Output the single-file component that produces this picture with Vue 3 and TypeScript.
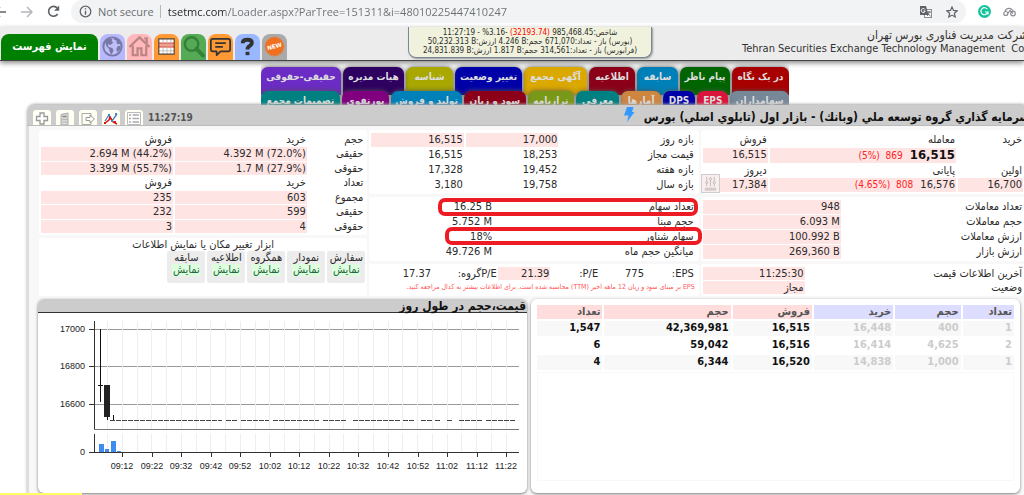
<script setup lang="ts">
import { ref } from 'vue'

interface Tab { label: string; color: string; grow: number }

const url = ref('tsetmc.com/Loader.aspx?ParTree=151311&i=48010225447410247')

const topTabs: Tab[] = [
  { label: 'در یک نگاه', color: '#a80000', grow: 57 },
  { label: 'پیام ناظر', color: '#006400', grow: 50 },
  { label: 'سابقه', color: '#0080b8', grow: 41 },
  { label: 'اطلاعیه', color: '#8b0018', grow: 46 },
  { label: 'آگهی مجمع', color: '#dba800', grow: 63 },
  { label: 'تغییر وضعیت', color: '#0000a8', grow: 67 },
  { label: 'شناسه', color: '#a8a800', grow: 47 },
  { label: 'هیات مدیره', color: '#2e0060', grow: 61 },
  { label: 'حقیقی-حقوقی', color: '#6a2cc4', grow: 80 },
]
const lowerTabs: Tab[] = [
  { label: 'سهامداران', color: '#778899', grow: 58 },
  { label: 'EPS', color: '#dc143c', grow: 31 },
  { label: 'DPS', color: '#0000a8', grow: 32 },
  { label: 'آمارها', color: '#cd853f', grow: 39 },
  { label: 'معرفی', color: '#008080', grow: 43 },
  { label: 'ترازنامه', color: '#789818', grow: 46 },
  { label: 'سود و زیان', color: '#8b0018', grow: 61 },
  { label: 'تولید و فروش', color: '#0080b8', grow: 70 },
  { label: 'پورتفوی', color: '#800080', grow: 47 },
  { label: 'تصمیمات مجمع', color: '#008080', grow: 78 },
]
const columns = (tabs: Tab[]) => tabs.map(t => `${t.grow}fr`).join(' ')

const ranges = [
  ['بازه روز', '17,000', '16,515'],
  ['قیمت مجاز', '18,253', '16,515'],
  ['بازه هفته', '19,452', '17,328'],
  ['بازه سال', '19,758', '3,180'],
]
const shares = [
  ['تعداد سهام', '16.25 B'],
  ['حجم مبنا', '5.752 M'],
  ['سهام شناور', '18%'],
  ['میانگین حجم ماه', '49.726 M'],
]
const trades = [
  ['تعداد معاملات', '948'],
  ['حجم معاملات', '6.093 M'],
  ['ارزش معاملات', '100.992 B'],
  ['ارزش بازار', '269,360 B'],
]
const clients = [
  { head: true, cells: ['حجم', 'خرید', 'فروش'] },
  { head: false, cells: ['حقیقی', '4.392 M (72.0%)', '2.694 M (44.2%)'] },
  { head: false, cells: ['حقوقی', '1.7 M (27.9%)', '3.399 M (55.7%)'] },
  { head: true, cells: ['تعداد', 'خرید', 'فروش'] },
  { head: false, cells: ['مجموع', '603', '235'] },
  { head: false, cells: ['حقیقی', '599', '232'] },
  { head: false, cells: ['حقوقی', '4', '3'] },
]
const tools = ['سفارش', 'نمودار', 'همگروه', 'اطلاعیه', 'سابقه']
const orders = [
  ['1', '400', '16,448', '16,515', '42,369,981', '1,547'],
  ['2', '4,625', '16,414', '16,516', '59,042', '6'],
  ['1', '1,000', '14,838', '16,520', '6,344', '4'],
]
const times = ['09:12', '09:22', '09:32', '09:42', '09:52', '10:02', '10:12', '10:22', '10:32', '10:42', '10:52', '11:02', '11:12', '11:22']
const tickX = (i: number) => 84 + Math.round(i * 29.55)
const gridX = Array.from({ length: 28 }, (_, i) => 69 + Math.round(i * 14.77))
const prices = [
  { label: '17000', y: 16 },
  { label: '16800', y: 53 },
  { label: '16600', y: 91 },
]
const flatRuns = [[72, 184], [188, 199], [203, 231], [235, 281], [285, 308], [315, 362], [365, 376], [383, 394], [397, 403], [409, 415], [421, 444], [448, 477]]
</script>

<template>
  <div class="page">
    <div class="browser">
      <div class="nav">
        <button aria-label="Back"><svg width="12" height="12" viewBox="0 0 12 12"><path d="M11 6H1M5 1 0 6l5 5" fill="none" stroke="#5f6368" stroke-width="1.5" /></svg></button>
        <button aria-label="Forward"><svg width="12" height="12" viewBox="0 0 12 12"><path d="M0 6h10M6 1l5 5-5 5" fill="none" stroke="#b5b7ba" stroke-width="1.5" /></svg></button>
        <button aria-label="Reload"><svg width="13" height="13" viewBox="0 0 13 13"><path d="M10.6 9A4.9 4.9 0 1 1 10.3 3.2" fill="none" stroke="#5f6368" stroke-width="1.6" /><path d="M12.2 0.6v5.2H7z" fill="#5f6368" /></svg></button>
      </div>
      <div class="address">
        <svg width="13" height="13" viewBox="0 0 13 13"><circle cx="6.500" cy="6.500" r="5.300" fill="none" stroke="#5f6368" stroke-width="1.300" /><path d="M6.500 5.700v4M6.500 3.200v1.400" stroke="#5f6368" stroke-width="1.400" /></svg>
        <label for="url">Not secure</label>
        <span class="bar"></span>
        <input id="url" v-model="url" type="text" dir="ltr" spellcheck="false" />
        <button aria-label="Translate"><svg width="12" height="12" viewBox="0 0 12 12"><rect x="4.500" y="3.500" width="7" height="8" fill="#fff" stroke="#8a8d91" /><path d="M0 0h6l2.500 9H0z" fill="#5f6368" /><path d="M5 3.500A2 2 0 1 0 5.200 5H3.500" fill="none" stroke="#fff" /><path d="M7 6h4M9 5v1c0 2-1 3-2 4M7.500 7.500l3 2.500" fill="none" stroke="#5f6368" /></svg></button>
        <button aria-label="Bookmark"><svg width="12" height="12" viewBox="0 0 12 12"><path d="M6 1l1.500 3.400 3.700.4-2.800 2.500.8 3.700L6 9.100 2.800 11l.8-3.700L.8 4.800l3.700-.4z" fill="none" stroke="#5f6368" stroke-width="1.200" /></svg></button>
      </div>
      <button aria-label="Writing assistant"><svg width="13" height="13" viewBox="0 0 13 13"><circle cx="6.500" cy="6.500" r="6.500" fill="#15c39a" /><path d="M9.300 4.200A3.500 3.500 0 1 0 9.700 7.500M7 7h3v2.500" fill="none" stroke="#fff" stroke-width="1.200" /></svg></button>
      <button aria-label="Extension"><svg width="13" height="10" viewBox="0 0 13 10"><g fill="none" stroke="#8a8d91" stroke-width="1.200"><circle cx="2.800" cy="6.500" r="2" /><circle cx="10" cy="6.500" r="2.300" /><path d="M2 4.500C3 1 8 0 10 3.800M4.800 6.500 7 3.500l3 3" /></g></svg></button>
    </div>

    <header class="header">
      <nav class="site-nav" dir="ltr">
        <button class="menu-tab">نمایش فهرست</button>
        <a href="#map" class="icon-tab globe" aria-label="Map"><svg viewBox="0 0 26 26"><circle cx="13" cy="13" r="9.500" fill="#c0c0f8" stroke="#7878a8" stroke-width="2" /><path d="M5 7l5-2.500 3 1-1 2 2 1-3 3-3-1 1 3 4 1 1 3-2 4-2-3-.500-3-3-3zM15 4l4 2 2.500 4-2.500 1-2-2 .500-2-3-1zM18 13l3.500-1-.500 4-3 3-1-3z" fill="#7878a8" /></svg></a>
        <a href="#home" class="icon-tab home" aria-label="Home"><svg viewBox="0 0 26 26"><path d="M2.500 13.500 13 3.500l10.500 10M6 12v10h5v-7h4v7h5V12M18 4.500h2.500v5" fill="none" stroke="#bd8585" stroke-width="2.400" /></svg></a>
        <a href="#table" class="icon-tab orange" aria-label="Market table"><svg viewBox="0 0 26 26"><path d="M5 5h16v16H5z" fill="#fff" /><path d="M5 9h16v5H5z" fill="#f8a090" /><path d="M5 9.500h16M5 13.500h16" stroke="#e05040" /><path d="M9.500 5v16M13.500 5v16M17.500 5v16M5 17.500h16" stroke="#aaa" stroke-width=".7" /><path d="M5 5h16v16H5z" fill="none" stroke="#554433" stroke-width="1.200" /></svg></a>
        <a href="#search" class="icon-tab green" aria-label="Search"><svg viewBox="0 0 26 26"><circle cx="11" cy="10.500" r="7" fill="none" stroke="#37803a" stroke-width="2.600" /><path d="m16 15.500 7 7" stroke="#37803a" stroke-width="4" stroke-linecap="round" /></svg></a>
        <a href="#messages" class="icon-tab orange" aria-label="Messages"><svg viewBox="0 0 26 26"><path d="M5 5h16q2 0 2 2v9q0 2-2 2h-8l-4 4v-4H5q-2 0-2-2V7q0-2 2-2z" fill="none" stroke="#333" stroke-width="1.800" stroke-linejoin="round" /><path d="M7.500 9.500h11M7.500 13.500h8" stroke="#333" stroke-width="1.800" /></svg></a>
        <a href="#help" class="icon-tab blue" aria-label="Help"><svg viewBox="0 0 26 26"><path d="M8 9.500Q8 6 13 6q4.500 0 4.500 3.200 0 2-2.300 3.200-2.200 1.200-2.200 3.600" fill="none" stroke="#333" stroke-width="4" /><path d="M11 18.500h4V22h-4z" fill="#333" /></svg></a>
        <a href="#new" class="icon-tab grey" aria-label="New"><svg viewBox="0 0 26 26"><circle cx="13" cy="13" r="9.500" fill="#f07020" stroke="#e87830" stroke-width="1.600" stroke-dasharray="1.500 1" /><text x="13" y="15" text-anchor="middle" transform="rotate(-14 13 13)" class="new-text">NEW</text></svg></a>
      </nav>
      <div class="index-box">
        <div>شاخص:985,468.45 <bdi class="neg" dir="ltr">(32193.74)</bdi> <bdi dir="ltr">11:27:19 - %3.16-</bdi></div>
        <div>(بورس) باز - تعداد:671,070 حجم:<bdi>4.246 B</bdi> ارزش:<bdi>50,232.313 B</bdi></div>
        <div>(فرابورس) باز - تعداد:314,561 حجم:<bdi>1.817 B</bdi> ارزش:<bdi>24,831.839 B</bdi></div>
      </div>
      <div class="company">
        <div class="company-fa">شرکت مدیریت فناوری بورس تهران</div>
        <div class="company-en" dir="ltr">Tehran Securities Exchange Technology Management&nbsp; Co</div>
      </div>
    </header>

    <nav class="tabs">
      <div class="tab-row" :style="{ gridTemplateColumns: columns(topTabs) }">
        <button v-for="t in topTabs" :key="t.label" :style="{ background: t.color }">{{ t.label }}</button>
      </div>
      <div class="tab-row lower" :style="{ gridTemplateColumns: columns(lowerTabs) }">
        <button v-for="t in lowerTabs" :key="t.label" :style="{ background: t.color }">{{ t.label }}</button>
      </div>
    </nav>

    <main class="panel">
      <div class="panel-head" dir="ltr">
        <button class="tool" aria-label="Add"><svg viewBox="0 0 18 15"><path d="M7 3h4v3.500h3.500v4H11V14H7v-3.500H3.500v-4H7z" fill="#fff" stroke="#999" stroke-width="1.300" /></svg></button>
        <button class="tool" aria-label="Calculator"><svg viewBox="0 0 18 15"><path d="M5 4.500 12 3v12H5z" fill="#d8d8d8" stroke="#aaa" /><path d="M6.500 6.500h4" stroke="#888" stroke-width="1.500" /><path d="M6.500 9.500h5M6.500 12h5" stroke="#999" stroke-dasharray="1 1" /></svg></button>
        <button class="tool" aria-label="Export"><svg viewBox="0 0 18 15"><path d="M12 6V3.500H3v11h9V12" fill="none" stroke="#aaa" /><path d="M7 7.500h4V5l4.500 4-4.500 4v-2.500H7z" fill="#fff" stroke="#999" /></svg></button>
        <button class="tool" aria-label="Chart"><svg viewBox="0 0 18 15"><path d="m3 11 4-6 3 6 5-7" fill="none" stroke="#3d85c6" stroke-width="1.300" /><path d="m3 13 4-3 1-3 3 5 4 2" fill="none" stroke="#e01010" stroke-width="1.500" /><path d="M6 4h2v2H6zM9 10h2v2H9zM13 3h2v2h-2z" fill="#3d85c6" /><path d="M2 12h2v2H2zM7 7h2v2H7zM12 11h2v2h-2z" fill="#e01010" /></svg></button>
        <button class="tool" aria-label="List"><svg viewBox="0 0 18 15"><path d="M2.500 2.500h13v12h-13z" fill="#fff" stroke="#bbb" /><path d="M4 5h2M4 8.500h2M4 12h2M7.500 5h6.500M7.500 8.500h6.500M7.500 12h6.500" stroke="#aaa" stroke-width="1.400" /></svg></button>
        <time>11:27:19</time>
        <svg class="bolt" width="11" height="15" viewBox="0 0 11 15"><path d="M3 0h6.500L8 5h2.500L3 15l1.500-6.500H0z" fill="#3399ff" /></svg>
        <h1 dir="rtl">سرمايه گذاري گروه توسعه ملي (وبانك) - بازار اول (تابلوي اصلي) بورس</h1>
      </div>

      <div class="info">
        <div class="col">
          <section class="card tall quotes">
            <span>خرید</span><span>معامله</span><span>فروش</span>
            <b></b><b class="pink"><strong>16,515</strong> <bdi class="chg" dir="ltr">(5%)&nbsp; 869</bdi></b><b class="pink">16,515</b>
            <span>اولین</span><span>پایانی</span><span>دیروز</span>
            <b class="pink">16,700</b><b class="pink">16,576 <bdi class="chg" dir="ltr">(4.65%)&nbsp; 808</bdi></b><b class="pink">17,384</b>
            <button class="mixer" aria-label="Settings"><svg viewBox="0 0 18 18"><g fill="none" stroke="#c9b8b8"><path d="M5 2v10M9 2v10M13 2v10" /><circle cx="5" cy="8" r="1.200" fill="#eee" /><circle cx="9" cy="4.500" r="1.200" fill="#eee" /><circle cx="13" cy="8" r="1.200" fill="#eee" /><path d="M3.500 14h3v2h-3zM7.500 14h3v2h-3zM11.500 14h3v2h-3z" /></g></svg></button>
          </section>
          <section class="card tall pairs">
            <template v-for="t in trades" :key="t[0]"><span>{{ t[0] }}</span><b class="pink"><bdi dir="ltr">{{ t[1] }}</bdi></b></template>
          </section>
          <section class="card short status">
            <span>آخرین اطلاعات قیمت</span><b class="pink">11:25:30</b>
            <span>وضعیت</span><b class="pink">مجاز</b>
          </section>
        </div>

        <div class="col">
          <section class="card tall ranges">
            <template v-for="(r, i) in ranges" :key="r[0]"><span>{{ r[0] }}</span><b :class="{ pink: i === 0 }">{{ r[1] }}</b><b :class="{ pink: i === 0 }">{{ r[2] }}</b></template>
          </section>
          <section class="card tall shares">
            <template v-for="s in shares" :key="s[0]"><span>{{ s[0] }}</span><b><bdi dir="ltr">{{ s[1] }}</bdi></b></template>
            <i class="mark first"></i><i class="mark second"></i>
          </section>
          <section class="card short eps">
            <div class="eps-row"><span>EPS:</span><b>775</b><span>P/E:</span><b class="pink">21.39</b><span>P/Eگروه:</span><b>17.37</b></div>
            <p>EPS بر مبنای سود و زیان 12 ماهه اخیر (TTM) محاسبه شده است. برای اطلاعات بیشتر به کدال مراجعه کنید.</p>
          </section>
        </div>

        <div class="col">
          <section class="card clients">
            <template v-for="(row, r) in clients" :key="r">
              <b v-for="(c, i) in row.cells" :key="i" :class="{ pink: !row.head && i > 0 }"><bdi>{{ c }}</bdi></b>
            </template>
          </section>
          <section class="card toolbox">
            <div>ابزار تغییر مکان یا نمایش اطلاعات</div>
            <div class="tool-list">
              <button v-for="t in tools" :key="t">{{ t }}<em>نمایش</em></button>
            </div>
          </section>
        </div>
      </div>

      <div class="bottom">
        <section class="box book">
          <table>
            <thead><tr>
              <th class="buy c1">تعداد</th><th class="buy c2">حجم</th><th class="buy c3">خرید</th>
              <th class="sell c4">فروش</th><th class="sell c5">حجم</th><th class="sell c6">تعداد</th>
            </tr></thead>
            <tbody><tr v-for="(o, r) in orders" :key="r"><td v-for="(v, i) in o" :key="i" :class="{ faded: i < 3 }">{{ v }}</td></tr></tbody>
          </table>
          <div class="rest"></div>
        </section>
        <section class="box">
          <h2>قیمت،حجم در طول روز</h2>
          <svg class="chart" viewBox="0 0 489 166" direction="ltr">
            <path v-for="p in prices" :key="p.y" :d="`M51 ${p.y}.500H481`" stroke="#999" />
            <path v-for="x in gridX" :key="x" :d="`M${x}.500 8V116M${x}.500 121V139`" stroke="#eee" />
            <path v-for="p in prices" :key="p.label" :d="`M51 ${p.y}.500h5`" stroke="#333" />
            <text v-for="p in prices" :key="p.label" x="47" :y="p.y + 3" text-anchor="end">{{ p.label }}</text>
            <path d="M56.500 8V117M56.500 121V140M51 139.500h5" stroke="#333" />
            <path d="M56 116.500H481" stroke="#777" />
            <path d="M56 139.500H481" stroke="#333" stroke-width="1.500" />
            <path d="M62.500 16V89M60 72.500h5M69.500 103v4M75.500 102v5" stroke="#111" />
            <path d="M66 72h6v32h-6z" />
            <path v-for="f in flatRuns" :key="f[0]" :d="`M${f[0]} 107.500H${f[1]}`" stroke="#444" stroke-dasharray="5 1" />
            <path d="M61 131h5v8h-5zM67 136h4v3h-4zM73 128h5v11h-5zM79 138h4v1h-4z" fill="#3f8cf0" />
            <text x="47" y="142" text-anchor="end">0</text>
            <g v-for="(t, i) in times" :key="t">
              <path :d="`M${tickX(i)}.500 140v4`" stroke="#333" />
              <text :x="tickX(i)" y="156" text-anchor="middle">{{ t }}</text>
            </g>
          </svg>
        </section>
      </div>
    </main>
    <div class="loading"></div>
  </div>
</template>

<style>
body { overflow: hidden; background: #fff; }
</style>

<style scoped>
.page {
  position: relative; display: flex; flex-direction: column; height: 100vh; overflow: hidden;
  font: 11px/14px "DejaVu Sans Condensed", "DejaVu Sans", sans-serif; color: #2b2b2b;
}
* { box-sizing: border-box; }
button { font: inherit; color: inherit; border: 0; padding: 0; background: none; }
svg { display: block; }
b { font-weight: normal; }

.browser { display: flex; align-items: center; gap: 12px; height: 27px; padding: 0 0 4px; flex: none; }
.nav { display: flex; gap: 14px; margin-left: -5px; width: 64px; }
.address { display: flex; align-items: center; flex: 1; height: 23px; padding: 0 8px; border-radius: 12px; background: #f1f3f4; font-family: "Open Sans", sans-serif; color: #6b6f73; }
.address label { margin-left: 6px; font-size: 11px; }
.bar { width: 1px; height: 13px; margin: 0 7px 0 6px; background: #b5b7ba; }
.address input {
  flex: 1; min-width: 0; border: 0; padding: 0; outline: 0; font: 11px "Open Sans", sans-serif; color: #6b6f73;
  background: linear-gradient(90deg, #222 57px, #6b6f73 57px); background-clip: text; -webkit-text-fill-color: transparent;
}
.address button { margin-left: 14px; }
.browser > button:last-child { margin-right: 8px; }

.header { display: flex; flex: none; direction: ltr; height: 34px; background: #ececec; border-bottom: 1px solid #444; box-shadow: 0 2px 5px #888; }
.site-nav { display: flex; align-items: flex-end; gap: 2px; padding-left: 1px; }
.menu-tab { width: 97px; height: 26px; border-radius: 8px 8px 0 0; background: green; color: #fff; font-size: 11px; font-weight: bold; }
.icon-tab { width: 25px; height: 26px; border-radius: 8px 8px 0 0; }
.globe { background: #b8b8fc; }
.home { background: #ffb8bc; }
.orange { background: #ff9933; }
.green { background: #55aa55; }
.blue { background: #99b8ff; }
.grey { background: #aaa; }
.new-text { font: bold 6px "DejaVu Sans", sans-serif; fill: #fff; }
.index-box { direction: rtl; flex: none; width: 244px; height: 31px; margin-left: 121px; padding-top: 1px; border: 1px solid #789; border-top: 0; border-radius: 0 0 8px 8px; background: #f0f2dd; text-align: center; font-size: 8px; line-height: 9px; white-space: nowrap; box-shadow: 1px 1px 2px #999; }
.neg { color: red; }
.company { flex: 1; min-width: 0; direction: rtl; font-size: 12px; line-height: 14px; white-space: nowrap; color: #333; padding-top: 1px; }
.company-fa { margin-right: -4px; }
.company-en { margin-left: 90px; font-size: 11px; }

.tabs { flex: none; width: 528px; max-width: 60vw; height: 44px; margin-left: 261px; padding-top: 6px; overflow: hidden; direction: rtl; }
.tab-row { display: grid; gap: 2px; }
.tab-row button { min-width: 0; height: 28px; padding-bottom: 9px; border-radius: 7px 7px 0 0; box-shadow: 0 0 5px #555; color: #ddd; font-weight: bold; font-size: 10px; white-space: nowrap; }
.tab-row.lower { margin-top: -4px; }

.panel { flex: 1; min-height: 0; direction: rtl; margin-left: 27px; border-left: 2px solid #ddd; border-radius: 8px 0 0 0; background: #f8f8f8; box-shadow: 0 -1px 3px #aaa; position: relative; }
.panel-head { display: flex; align-items: flex-end; gap: 5px; height: 21px; margin-left: -2px; padding-left: 6px; background: #ccc; border-radius: 8px 0 0 0; border-bottom: 1px solid #bbb; }
.tool { width: 18px; height: 15px; border-radius: 3px 3px 0 0; background: #fffff4; }
.panel-head time { align-self: center; font-weight: bold; font-size: 10px; color: #555; margin-top: 5px; }
.bolt { margin-left: auto; align-self: flex-start; margin-top: 2px; }
h1 { margin: 0 -6px 0 4px; font-size: 12px; line-height: 16px; color: #111; white-space: nowrap; }

.info { display: grid; grid-template-columns: 325fr 329fr 328fr; gap: 2px; padding: 4px 0 3px 10px; margin-right: -2px; }
.col { display: flex; flex-direction: column; gap: 3px; min-width: 0; }
.card { position: relative; display: grid; gap: 1px 2px; padding: 3px 2px 2px; background: #fff; border-radius: 3px; align-content: stretch; }
.card span, .card b { padding: 0 1px; line-height: 13px; white-space: nowrap; min-width: 0; }
.pink { background: #ffe4e4; }
.tall { min-height: 64px; }
.short { min-height: 32px; }
.quotes { grid-template-columns: 66fr 189fr 66fr; padding-right: 3px; }
.quotes strong { font-size: 13px; color: #111; }
.chg { color: #f22; font-size: 10px; margin-right: 4px; }
.mixer { position: absolute; left: 0; bottom: 1px; width: 19px; height: 19px; border: 1px solid #ccc; background: #f8eeee; }
.pairs { grid-template-columns: 184fr 141fr; padding-right: 3px; }
.status { grid-template-columns: 221fr 104fr; padding-right: 3px; }
.ranges { grid-template-columns: 135fr 93fr 93fr; padding-right: 4px; }
.shares { grid-template-columns: 200fr 122fr; padding-right: 4px; }
.mark { position: absolute; height: 18px; border: 4px solid #ed1c24; border-radius: 7px; }
.first { top: 1px; left: 69px; right: 1px; }
.second { top: 30px; left: 76px; right: -3px; }
.eps { padding-right: 4px; }
.eps-row { display: grid; grid-template-columns: 50fr 46fr 49fr 53fr 66fr 61fr; }
.eps p { margin: 0; font-size: 7px; line-height: 13px; color: #f55; white-space: nowrap; }
.clients { grid-template-columns: 56fr 133fr 133fr; min-height: 105px; padding-right: 3px; }
.toolbox { display: block; flex: 1; padding-top: 1px; line-height: 12px; text-align: center; }
.tool-list { display: flex; gap: 2px; direction: rtl; }
.tool-list button { width: 38px; height: 32px; padding-bottom: 6px; background: #ececec; border-radius: 2px; line-height: 12px; }
.tool-list em { display: block; margin: 0 5px; font-style: normal; color: #264; background: #dfd; }

.bottom { display: grid; grid-template-columns: 489fr 489fr; gap: 4px; padding: 0 4px 0 9px; }
.box { min-height: 194px; min-width: 0; overflow: hidden; background: #fff; border-radius: 6px; box-shadow: 0 1px 3px #777; }
h2 { margin: 0; padding: 0 1px; height: 14px; background: #ccc; border-bottom: 1px solid #333; font-size: 12px; line-height: 14px; color: #111; }
.chart { width: 100%; font: 9px "Liberation Sans", sans-serif; fill: #222; shape-rendering: crispEdges; }
.book { padding: 4px; }
table { width: 100%; table-layout: fixed; border-spacing: 2px; font-weight: bold; }
th, td { height: 14px; padding: 0 2px; text-align: right; line-height: 14px; }
td { padding-bottom: 1px; color: #111; }
th { color: #555; }
tbody tr:nth-child(odd) td { background: #f8f8f8; }
td.faded { color: #ccc; }
.buy { background: #ddf; }
.sell { background: #fdd; }
.c1 { width: 11%; }
.c2 { width: 14%; }
.c3 { width: 17%; }
.c4 { width: 17%; }
.c5 { width: 27%; }
.rest { height: 109px; margin: 0 2px; border: 1px solid #f8f8f8; }
.loading { position: absolute; left: 0; bottom: 0; width: 8%; height: 2px; background: #ff6; }
</style>
